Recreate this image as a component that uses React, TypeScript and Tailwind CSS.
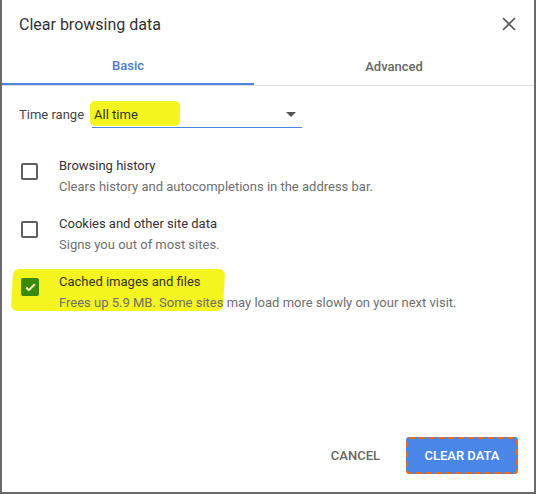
import React from "react";

const font = { fontFamily: "Roboto, 'Liberation Sans', sans-serif" };

function Row({ title, sub, checked, hl }: { title: string; sub: string; checked?: boolean; hl?: boolean }) {
  return (
    <div className="relative flex items-start h-[58px]">
      {hl && <div className="absolute left-[10px] top-[-4px] w-[212px] h-[42px] bg-[#f4f41e] rounded-[6px] -skew-x-3" />}
      <div className="relative w-[57px] shrink-0 pt-[4px] pl-[19px]">
        {checked ? (
          <div className="w-[18px] h-[18px] mt-[1px] rounded-[2px] bg-[#3a8a12] flex items-center justify-center">
            <svg width="13" height="13" viewBox="0 0 24 24" fill="none" stroke="#f4f4c0" strokeWidth="3.5"><path d="M4 12l5 5L20 6" /></svg>
          </div>
        ) : (
          <div className="w-[17px] h-[17px] mt-[2px] rounded-[2px] border-2 border-[#5f5f5f]" />
        )}
      </div>
      <div className="relative">
        <div className="text-[13px] text-[#333] leading-[18px]">{title}</div>
        <div className="text-[13px] text-[#6f6f6f] leading-[18px] mt-[3px]">{sub}</div>
      </div>
    </div>
  );
}

export default function App() {
  return (
    <div style={font} className="w-[536px] h-[494px] bg-[#6a6a6a] pl-[2px] pr-[2px] pb-[2px]">
      <div className="w-full h-full bg-white flex flex-col">
        <div className="flex items-center justify-between h-[48px] pl-[17px] pr-[18px]">
          <div className="text-[16px] text-[#333] mt-[2px]">Clear browsing data</div>
          <svg width="14" height="14" viewBox="0 0 14 14" stroke="#555" strokeWidth="1.6"><path d="M1 1l12 12M13 1L1 13" /></svg>
        </div>
        <div className="flex h-[38px] border-b border-[#ddd]">
          <div className="w-[252px] flex items-center justify-center text-[13px] font-medium text-[#4a7bd0] border-b-2 border-[#4a86e0]">Basic</div>
          <div className="flex-1 flex items-center justify-center text-[13px] font-medium text-[#666]">Advanced</div>
        </div>
        <div className="flex items-center pl-[17px] mt-[14px] h-[30px]">
          <span className="text-[13px] text-[#444] mr-[8px]">Time range</span>
          <div className="relative w-[210px] h-[26px] border-b border-[#4a86e0] flex items-center">
            <div className="absolute left-[-2px] top-[-1px] w-[90px] h-[25px] bg-[#f4f41e] rounded-[5px]" />
            <span className="relative text-[13px] text-[#333] ml-[2px]">All time</span>
            <svg className="absolute right-[6px] top-[10px]" width="10" height="6" viewBox="0 0 10 6"><path d="M0 0h10L5 5z" fill="#555" /></svg>
          </div>
        </div>
        <div className="mt-[27px]">
          <Row title="Browsing history" sub="Clears history and autocompletions in the address bar." />
          <Row title="Cookies and other site data" sub="Signs you out of most sites." />
          <Row title="Cached images and files" sub="Frees up 5.9 MB. Some sites may load more slowly on your next visit." checked hl />
        </div>
        <div className="flex-1" />
        <div className="flex items-center justify-end pr-[16px] pb-[18px] gap-[26px]">
          <span className="text-[13px] font-medium text-[#666]">CANCEL</span>
          <div className="w-[112px] h-[37px] bg-[#4a86e8] border-2 border-dashed border-[#f06a10] rounded-[3px] flex items-center justify-center text-[13px] font-medium text-white">CLEAR DATA</div>
        </div>
      </div>
    </div>
  );
}
